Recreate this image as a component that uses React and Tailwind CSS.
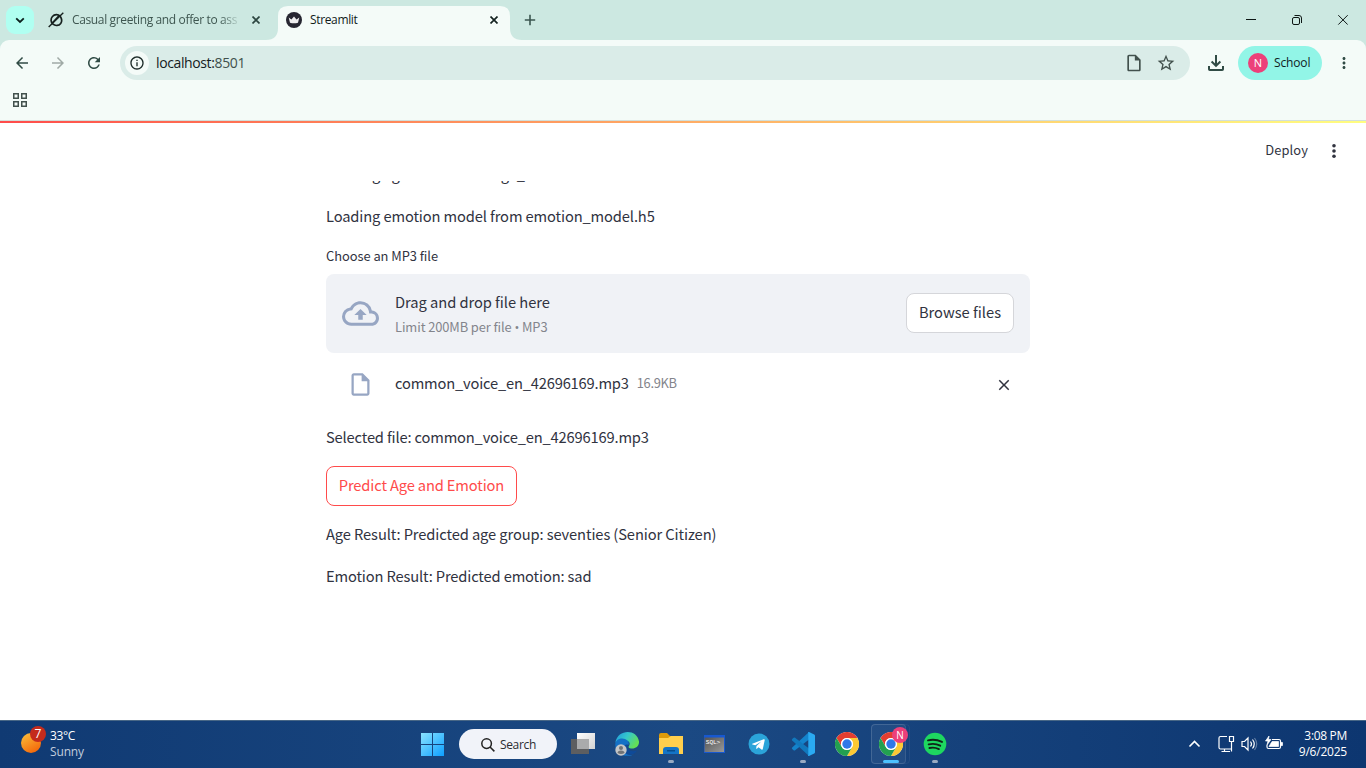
import React from "react";
import {
  MdArrowBack, MdArrowForward, MdRefresh, MdInfoOutline, MdOutlineInsertDriveFile,
  MdStarBorder, MdMoreVert, MdOutlineCloudUpload, MdClose,
} from "react-icons/md";

function TabStrip() {
  return (
    <div className="flex h-10 bg-[#cce8e1] font-['Open_Sans','Noto_Sans',sans-serif] text-[12px]">
      <div className="flex w-[278px] pl-1.5 pt-1.5">
        <button className="flex h-7 w-7 items-center justify-center rounded-[9px] bg-[#b0fff1]">
          <svg width="10" height="7" viewBox="0 0 10 7" fill="none" stroke="#0c211d" strokeWidth="1.8"><path d="M1.2 1.3 5 5 8.8 1.3" /></svg>
        </button>
        <svg className="ml-3.5 mt-1.5" width="16" height="16" viewBox="0 0 16 16" fill="none" stroke="#17211f">
          <path d="M12.2 4.2a5.4 5.4 0 1 0 .5 7.2c1.4-1.9 1.2-4.6-.5-7.2M4.1 11.2 10.7 4" strokeWidth="1.7" />
          <path d="M.7 15 15.3.8" strokeWidth="1.4" />
        </svg>
        <div className="ml-2 h-7 w-[168px] overflow-hidden whitespace-nowrap leading-7 text-[#3e5650] tracking-[-0.36px] [mask-image:linear-gradient(to_right,black_148px,transparent_169px)]">
          Casual greeting and offer to ass
        </div>
        <svg className="ml-3 mt-2.5" width="8" height="8" viewBox="0 0 8 8" stroke="#2c4640" strokeWidth="1.7"><path d="m.5.5 7 7m0-7-7 7" /></svg>
      </div>
      <div className="flex h-10 w-[232px] bg-[#f4fbf8] pl-2 pt-1.5 [clip-path:path('M-12_40Q0_40_0_28V16Q0_6_10_6H222Q232_6_232_16V40H0V40Z')]">
        <svg className="mt-1.5" width="16" height="16" viewBox="0 0 16 16">
          <circle cx="8" cy="8" r="8" fill="#262631" />
          <path d="m2.7 5.4 2.7 2 2.6-2.8 2.5 2.8 2.8-2-1.3 5.3q-4 1-8 0Z" fill="#eeeeef" />
        </svg>
        <span className="ml-2 w-[180px] leading-7 tracking-[-0.35px] text-[#111c1a]">Streamlit</span>
        <svg className="mt-2.5" width="8" height="8" viewBox="0 0 8 8" stroke="#142321" strokeWidth="1.7"><path d="m.5.5 7 7m0-7-7 7" /></svg>
      </div>
      <div className="flex flex-1">
        <svg className="mt-[14px] ml-[14px]" width="12" height="12" viewBox="0 0 12 12" stroke="#3b5650" strokeWidth="1.6"><path d="M6 .8v10.4M.8 6h10.4" /></svg>
        <div className="flex-1" />
        <svg className="mt-[14px]" width="102" height="12" viewBox="0 0 102 12" fill="none" stroke="#0d1614" strokeWidth="1">
          <path d="M0 5.5h10" />
          <rect x="46.5" y="3.5" width="7" height="7" rx="1.5" />
          <path d="M48.5 1.5h4.5q2.5 0 2.5 2.5v5" />
          <path d="m92.3 1.2 9.4 9.4m0-9.4-9.4 9.4" />
        </svg>
        <div className="w-[18px]" />
      </div>
    </div>
  );
}

function TabFeet() {
  return (
    <svg className="absolute left-0 top-0" width="1366" height="50" fill="#f4fbf8">
      <path d="M266 40q12 0 12-12v12ZM522 40q-12 0-12-12v12Z" />
    </svg>
  );
}

function Toolbar() {
  return (
    <div className="bg-[#cce8e1]">
      <div className="h-[80px] rounded-t-[9px] bg-[#f4fbf8] font-['Open_Sans','Noto_Sans',sans-serif]">
        <div className="flex items-center pt-1.5">
          <MdArrowBack className="ml-[13px] text-[18px] text-[#304b45]" />
          <MdArrowForward className="ml-[18px] text-[18px] text-[#a0aaa6]" />
          <MdRefresh className="ml-[18px] text-[18px] text-[#304b45]" />
          <div className="ml-[17px] flex h-[34px] w-[1070px] items-center rounded-full bg-[#daece8]">
            <div className="ml-[5px] flex h-6 w-6 items-center justify-center rounded-full bg-[#f4fbf8]">
              <MdInfoOutline className="text-[16px] text-[#1c2b28]" />
            </div>
            <span className="-mt-0.5 ml-[7px] flex-1 text-[14px] tracking-[-0.38px] text-[#14201e]">localhost:<span className="text-[#41504c]">8501</span></span>
            <MdOutlineInsertDriveFile className="text-[20px] text-[#42514d]" />
            <MdStarBorder className="ml-3 mr-3.5 text-[20px] text-[#42514d]" />
          </div>
          <svg className="ml-[18px]" width="16" height="16" viewBox="0 0 16 16" fill="none" stroke="#304b45" strokeWidth="2">
            <path d="M8 0v10.5M3.6 6.5 8 10.8l4.4-4.3M1 11v3.2q0 .8.8.8h12.4q.8 0 .8-.8V11" />
          </svg>
          <div className="ml-[14px] flex h-[34px] w-[84px] items-center rounded-full bg-[#92f5e7] pl-2.5">
            <span className="flex h-5 w-5 items-center justify-center rounded-full bg-[#ec407a] text-[11px] text-white">N</span>
            <span className="ml-1.5 text-[12px] tracking-[-0.15px] text-[#10211e]">School</span>
          </div>
          <MdMoreVert className="ml-[13px] text-[18px] text-[#304b45]" />
        </div>
        <svg className="ml-[13px] mt-[13px]" width="14" height="14" viewBox="0 0 14 14" fill="none" stroke="#42514d" strokeWidth="1.5">
          <path d="M.75.75h4.5v4.5H.75ZM8.75.75h4.5v4.5h-4.5ZM.75 8.75h4.5v4.5H.75ZM8.75 8.75h4.5v4.5h-4.5Z" />
        </svg>
      </div>
    </div>
  );
}

function StreamlitApp() {
  return (
    <div className="flex h-[600px] flex-col bg-white font-['Noto_Sans_CJK_SC','Noto_Sans',sans-serif] text-[#31333f]">
      <div className="h-px bg-[#d2dfdb]" />
      <div className="h-0.5 bg-gradient-to-r from-[#ff4b4b] to-[#fffd80]" />
      <div className="flex h-[58px] items-center justify-end pr-[23px]">
        <span className="mr-[17px] -mt-1 text-[12.9px] tracking-[0.1px]">Deploy</span>
        <svg width="18" height="18" className="-mt-0.5" viewBox="0 0 18 18" fill="#31333f"><circle cx="9" cy="3.7" r="1.8" /><circle cx="9" cy="9" r="1.8" /><circle cx="9" cy="14.3" r="1.8" /></svg>
      </div>
      <div className="flex-1 overflow-hidden pl-[326px] text-[14.7px]">
        <div className="flex w-[704px] flex-col whitespace-nowrap">
          <p className="-mt-[19px] h-6 leading-6 tracking-[-0.12px]">Loading age model from age_model.h5</p>
          <p className="mt-[18px] h-6 leading-6 tracking-[-0.12px]">Loading emotion model from emotion_model.h5</p>
          <label className="mt-[18px] h-5 text-[12.9px] leading-5 tracking-[-0.05px]">Choose an MP3 file</label>
          <div className="mt-2 flex h-[79px] items-center rounded-lg bg-[#f0f2f6] px-4">
            <MdOutlineCloudUpload className="text-[37px] text-[#97a6c3]" />
            <div className="-mt-px ml-4 flex-1">
              <div className="h-6 leading-6 tracking-[-0.05px]">Drag and drop file here</div>
              <div className="mt-[3px] h-5 text-[12.9px] leading-5 tracking-[-0.1px] text-[#83858c]">Limit 200MB per file <span className="font-['Open_Sans',sans-serif]">•</span> MP3</div>
            </div>
            <button className="-mt-px h-10 w-[108px] rounded-lg border border-[#d5d6da] bg-white pb-px">Browse files</button>
          </div>
          <div className="flex h-[62px] items-center pl-[21px]">
            <MdOutlineInsertDriveFile className="text-[27px] text-[#97a6c3]" />
            <span className="-mt-0.5 ml-[21px] tracking-[-0.18px]">common_voice_en_42696169.mp3</span>
            <span className="-mt-0.5 ml-2 flex-1 text-[12.9px] tracking-[-0.3px] text-[#83858c]">16.9KB</span>
            <MdClose className="mr-[17px] mt-0.5 text-[18px]" />
          </div>
          <p className="mt-2.5 h-6 leading-6 tracking-[-0.16px]">Selected file: common_voice_en_42696169.mp3</p>
          <button className="mt-[17px] h-10 w-[191px] rounded-lg border border-[#ff4b4b] pb-0.5 tracking-[-0.14px] text-[#ff4b4b]">Predict Age and Emotion</button>
          <p className="mt-4 h-6 leading-6 tracking-[-0.1px]">Age Result: Predicted age group: seventies (Senior Citizen)</p>
          <p className="mt-[18px] h-6 leading-6 tracking-[-0.14px]">Emotion Result: Predicted emotion: sad</p>
        </div>
      </div>
    </div>
  );
}

function ChromeIcon() {
  return (
    <svg width="24" height="24" viewBox="0 0 24 24">
      <circle cx="12" cy="12" r="12" fill="#fff" />
      <path d="M12 6h10.4A12 12 0 0 0 1.6 6l5.2 9A6 6 0 0 1 12 6Z" fill="#e43e30" />
      <path d="M12 6h10.4A12 12 0 0 1 12 24l5.2-9A6 6 0 0 0 12 6Z" fill="#fcc934" />
      <path d="M17.2 15 12 24A12 12 0 0 1 1.6 6l5.2 9a6 6 0 0 0 10.4 0Z" fill="#23a050" />
      <circle cx="12" cy="12" r="6" fill="#fff" /><circle cx="12" cy="12" r="4.7" fill="#2f78e8" />
    </svg>
  );
}

function Slot({ children, mark, active }) {
  return (
    <div className={"relative flex h-10 w-11 shrink-0 flex-col items-center justify-center " + (active ? "before:absolute before:inset-y-0 before:left-[2px] before:right-[7px] before:rounded before:border before:border-white/10 before:bg-white/5 after:absolute after:inset-y-0 after:left-[2px] after:right-[3px] after:rounded after:border after:border-white/5" : "")}>
      <div className="relative">{children}</div>
      {mark && <span className={"absolute bottom-px h-[3px] rounded-full " + (active ? "w-4 bg-[#4cc2ff]" : "w-1.5 bg-[#99aac2]")} />}
    </div>
  );
}

function Taskbar() {
  return (
    <div className="flex h-12 border-t border-[#486786] bg-gradient-to-r from-[#103a73] via-[#1b4983] to-[#0d3670] font-['Open_Sans','Noto_Sans',sans-serif] text-[12px] text-white">
      <div className="relative ml-[21px] mt-[11px] h-6 w-[29px]">
        <svg width="29" height="32" viewBox="0 0 29 32" className="absolute -top-1.5 left-0">
          <defs><linearGradient id="sun" x1="0" y1="0" x2=".6" y2="1"><stop stopColor="#fbc23c" /><stop offset="1" stopColor="#f46a0c" /></linearGradient></defs>
          <circle cx="10" cy="17" r="10" fill="url(#sun)" /><circle cx="17" cy="8" r="8" fill="#c42b1c" />
        </svg>
        <span className="absolute -top-1.5 left-[9px] w-4 text-center leading-4">7</span>
      </div>
      <div className="mt-[7px] w-[367px] leading-4 tracking-[-0.15px]"><div className="tracking-[-0.35px]">33°C</div><div className="text-[#c1cddd]">Sunny</div></div>
      <div className="mt-[3px] flex">
        <svg className="ml-1 mt-[9px]" width="23" height="23" viewBox="0 0 23 23">
          <defs><linearGradient id="win" x2="1" y2="1"><stop stopColor="#8ae3ff" /><stop offset="1" stopColor="#0d9fff" /></linearGradient></defs>
          <path d="M0 0h11v11H0ZM12 0h11v11H12ZM0 12h11v11H0ZM12 12h11v11H12Z" fill="url(#win)" />
        </svg>
        <div className="ml-[15px] mt-[5px] flex h-[30px] w-[98px] items-center rounded-full bg-[#f1f3f9] pl-[22px] text-[#2b2d31]">
          <svg className="mt-0.5" width="14" height="14" viewBox="0 0 14 14" fill="none" stroke="#222" strokeWidth="1.5"><circle cx="5.6" cy="5.6" r="4.8" /><path d="m9 9 4.4 4.4" /></svg>
          <span className="ml-[5px] mt-0.5 tracking-[-0.35px]">Search</span>
        </div>
        <div className="ml-1 flex">
          <Slot>
            <svg width="24" height="24" viewBox="0 0 24 24">
              <defs><linearGradient id="tv" x2="1" y2="1"><stop stopColor="#fff" /><stop offset="1" stopColor="#d2d2d2" /></linearGradient></defs>
              <path d="M6 1h18v16H6Z" fill="url(#tv)" /><path d="M0 7h18v15H0Z" fill="#5d5e60" /><path d="M6 7h12v10H6Z" fill="#aaabac" />
            </svg>
          </Slot>
          <Slot>
            <svg width="24" height="24" viewBox="0 0 24 24">
              <defs>
                <linearGradient id="edge" x2="1" y2=".5"><stop stopColor="#1f97df" /><stop offset=".5" stopColor="#35c8cb" /><stop offset="1" stopColor="#64df55" /></linearGradient>
              </defs>
              <path d="M.4 10.5C2.500-3 22-3.500 24 9.500c.3 5-3.500 7.500-8 7-2.500-.3-3-1.500-1.800-3C16.500 9 10 6 .4 10.500Z" fill="url(#edge)" />
              <path d="M.2 12C1 6 9 5 12.500 8.500c1.500 1.500 1.700 3 .8 4.500-3-1-5 2-3.500 5.500 2 5 7 5.500 9.700 3.500C13 26 0 24 .2 12Z" fill="#1470c6" />
              <path d="M12.500 12.500c-2 5 3.500 8 9.500 6-3.500 6-12.500 5.500-13.800-.5-.5-3 1.500-5.500 4.300-5.500Z" fill="#0f4a98" />
              <circle cx="6" cy="18" r="5.7" fill="#c5c6c8" /><circle cx="6" cy="16" r="2" fill="#717376" /><path d="M2.500 21q0-2.500 3.500-2.500T9.500 21Q6 23 2.500 21Z" fill="#717376" />
            </svg>
          </Slot>
          <Slot mark>
            <svg width="24" height="24" viewBox="0 0 24 24">
              <path d="M0 3q0-2 2-2h6l3 3h13v9H0Z" fill="#dc9a0a" /><path d="M0 6h9l3-2h12v18H0Z" fill="#ffcf4d" />
              <path d="M4 22v-4q0-3 3-3h10q3 0 3 3v4Z" fill="#1474c6" /><path d="M8 18h8v1.500H8Z" fill="#064d8d" />
            </svg>
          </Slot>
          <Slot>
            <svg width="24" height="24" viewBox="0 0 24 24">
              <defs><linearGradient id="sql" x2="1" y2="1"><stop stopColor="#535353" /><stop offset="1" stopColor="#999" /></linearGradient></defs>
              <path d="M1 3h21v18H1Z" fill="#1758d0" /><path d="M1.500 5.500h19.500v14.500H1.500Z" fill="url(#sql)" />
              <text x="2.800" y="11.500" fill="#fff" fontSize="6.200" fontFamily="Liberation Mono, monospace" textLength="14.500">SQL&gt;</text>
            </svg>
          </Slot>
          <Slot>
            <svg width="22" height="22" viewBox="0 0 22 22">
              <circle cx="11" cy="11" r="10.5" fill="#2ba4d9" />
              <path d="m4.3 10.8 11.4-4.6q1.2-.3 1 1l-1.9 8.9q-.3 1-1.3.4l-3-2.2-1.6 1.5q-.7.3-.7-.6l.3-2.3 4.8-4.4-6 3.800-2.800-.8q-.8-.3-.2-.7Z" fill="#fff" />
            </svg>
          </Slot>
          <Slot mark>
            <svg width="24" height="24" viewBox="0 0 24 24">
              <path d="M18 0 1.2 15.4q-.8.8 0 1.6l1.4 1.3q.8.5 1.5 0L18 7.4Z" fill="#1483cc" />
              <path d="M18 24 1.2 8.6q-.8-.8 0-1.6l1.4-1.3q.8-.5 1.5 0L18 16.6Z" fill="#1178bd" />
              <path d="m18 0 5.2 2.4q.8.4.8 1.3v16.6q0 .9-.8 1.3L18 24q-1.3.3-.7-1V1q-.6-1.300.7-1Z" fill="#2aaaf2" />
            </svg>
          </Slot>
          <Slot><ChromeIcon /></Slot>
          <Slot mark active>
            <ChromeIcon />
            <span className="absolute -right-[5px] -top-[5px] flex h-4 w-4 items-center justify-center rounded-full bg-[#ec407a] text-[10px] leading-4">N</span>
          </Slot>
          <Slot mark>
            <svg width="24" height="24" viewBox="0 0 24 24">
              <circle cx="12" cy="12" r="11.3" fill="#1ed760" />
              <path d="M5 8.4q7-1.8 14 1.5M5.7 12.4q6-1.6 11.5 1.3M6.4 16q5-1.2 9.5 1.1" fill="none" stroke="#102418" strokeWidth="1.9" strokeLinecap="round" />
            </svg>
          </Slot>
        </div>
      </div>
      <div className="flex flex-1 justify-end">
        <svg className="mt-[14px]" width="98" height="18" viewBox="0 0 98 18" fill="none" stroke="#fff" strokeWidth="1.2">
          <path d="m1.500 11.500 5-5 5 5" strokeWidth="1.6" />
          <path d="M39 1.500h-6.500q-1.500 0-1.500 1.500v9.500q0 1.500 1.500 1.500H43M36.500 14v2.500M33.500 16.500H42" />
          <path d="M41.500 1.500h4v5h-4ZM43.500 7v9.500" />
          <path d="M54 6.500h2.500L60 3v12l-3.500-3.500H54ZM62.500 6.500q2 2.500 0 5M64.500 4.500q3.500 4.500 0 9" />
          <path d="M66.500 3q4.500 6 0 12" opacity=".35" />
          <path d="M84 4.500h7q1.500 0 1.500 1.500v6q0 1.500-1.500 1.500H80.500q-1.500 0-1.500-1.500v-2" />
          <path d="M84 6.500h6.500v5h-9.500ZM93 7.500h1.500v3H93ZM81 1l-3.500 5H80l-1 4 4-5.500h-2.500Z" fill="#fff" strokeWidth=".7" />
        </svg>
        <div className="ml-[9px] mr-[19px] mt-[7px] flex w-[52px] flex-col items-end whitespace-nowrap leading-4"><span className="tracking-[-0.32px]">3:08 PM</span><span className="tracking-[-0.22px]">9/6/2025</span></div>
      </div>
    </div>
  );
}

export default function App() {
  return (
    <div className="relative h-[768px] w-[1366px] overflow-hidden">
      <TabStrip />
      <TabFeet />
      <Toolbar />
      <StreamlitApp />
      <Taskbar />
    </div>
  );
}
